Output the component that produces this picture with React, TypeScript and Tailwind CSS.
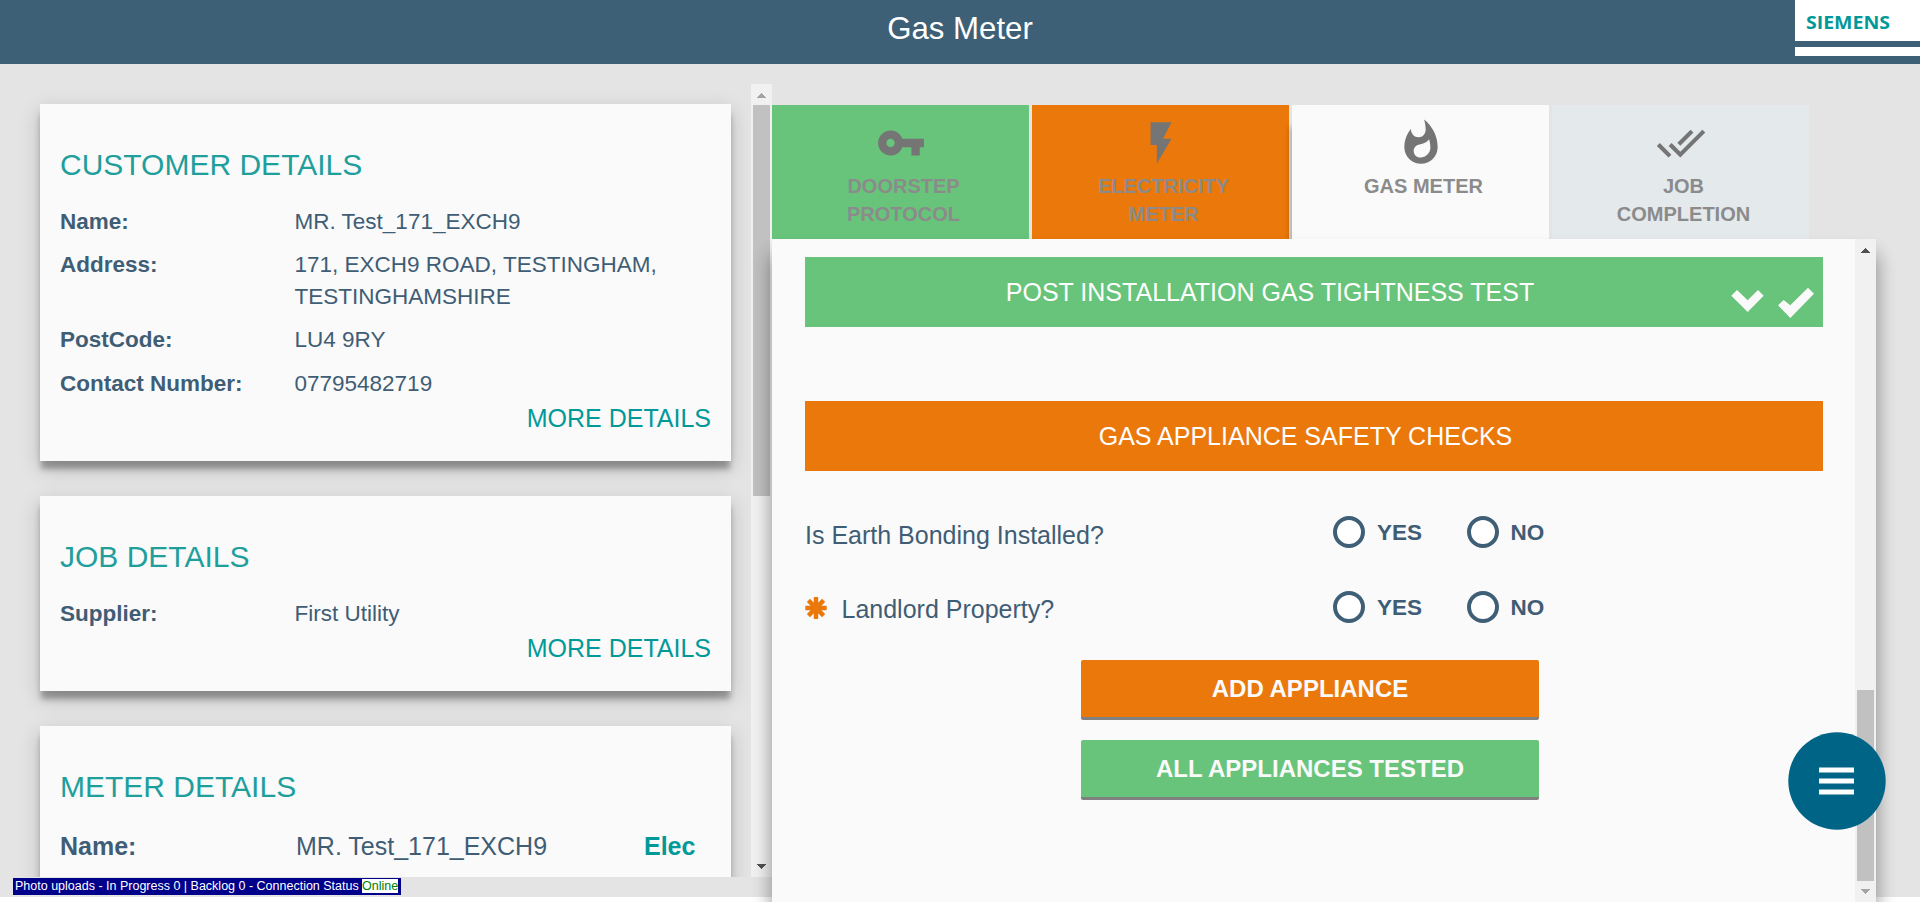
import type { ReactNode } from "react";

const cardShadow =
  "shadow-[0_9px_6px_-1px_rgba(0,0,0,0.3),0_7px_20px_0_rgba(0,0,0,0.19)]";

function Card({ title, className, children }: { title: string; className: string; children: ReactNode }) {
  return (
    <section className={`w-[691px] shrink-0 bg-[#fafafa] px-5 pt-[41px] ${cardShadow} ${className}`}>
      <h2 className="mb-[21px] text-[30px] leading-10 text-[#1f9f9c]">{title}</h2>
      {children}
    </section>
  );
}

function Row({ label, children, className = "" }: { label: string; children: ReactNode; className?: string }) {
  return (
    <div className={`flex text-[22.5px] leading-8 ${className}`}>
      <div className="w-[234.5px] shrink-0 font-bold">{label}</div>
      <div>{children}</div>
    </div>
  );
}

function MoreDetails() {
  return <a className="mt-0.5 block text-right text-[25px] leading-8 text-[#009999]">MORE DETAILS</a>;
}

function Arrow({ up = false, color }: { up?: boolean; color: string }) {
  return (
    <svg className="h-[21px] w-full shrink-0" viewBox="0 0 21 21" shapeRendering="crispEdges">
      <path d={up ? "M6 14h9l-4.5-5z" : "M6 8h9l-4.5 5z"} fill={color} />
    </svg>
  );
}

function Tab({ className, icon, lines }: { className: string; icon: string; lines: string[] }) {
  return (
    <div className={`flex h-[134px] w-[257px] flex-col items-center pt-[13px] ${className}`}>
      <svg className="size-[50px]" viewBox="0 0 24 24" fill="#757575">
        <path d={icon} />
      </svg>
      <div className="mt-1 pl-[6px] text-center text-[20px] leading-7 font-bold text-[#8b8b8b]">
        {lines.map((l) => (
          <div key={l}>{l}</div>
        ))}
      </div>
    </div>
  );
}

function Radio({ label, className }: { label: string; className: string }) {
  return (
    <label className={`flex items-center gap-3 ${className}`}>
      <span className="size-8 rounded-full border-4 border-[#3f5f77] bg-white" />
      <span className="pt-0.5 text-[22.5px] leading-7 font-bold">{label}</span>
    </label>
  );
}

function Question({ label, required = false, className }: { label: string; required?: boolean; className: string }) {
  return (
    <div className={`flex items-center ${className}`}>
      <div className={`flex w-[528px] items-center text-[25px] leading-7 ${required ? "pt-[3px]" : "pt-[5px]"}`}>
        {required && (
          <svg className="-mt-[1px] mr-[14.5px] size-[22px]" viewBox="-11 -11 22 22" stroke="#eb780b" strokeWidth="4.4">
            <path d="M0-11V11M-10.7 0H10.7M-7.6-7.6L7.6 7.6M-7.6 7.6L7.6-7.6" />
          </svg>
        )}
        {label}
      </div>
      <Radio label="YES" className="w-[133.5px]" />
      <Radio label="NO" className="" />
    </div>
  );
}

export default function App() {
  return (
    <div className="relative h-[902px] w-[1920px] overflow-hidden bg-white font-['Liberation_Sans',Arial,sans-serif] text-[#3f5d75]">
      <header className="flex h-16 items-start bg-[#3d6076]">
        <div className="w-[125px]" />
        <h1 className="flex-1 text-center text-[31.2px] leading-[58px] text-white">Gas Meter</h1>
        <div className="h-14 w-[125px] bg-white">
          <svg className="h-[41px] w-full" viewBox="0 0 125 41">
            <text
              x="11"
              y="28.5"
              textLength="84"
              lengthAdjust="spacingAndGlyphs"
              fontFamily="'Open Sans','Noto Sans',sans-serif"
              fontWeight="700"
              fontSize="18"
              fill="#009999"
            >
              SIEMENS
            </text>
          </svg>
          <div className="h-[5.5px] bg-[#3d6076]" />
        </div>
      </header>

      <main className="flex h-[833px] bg-[#e4e4e4]">
        <div className="flex h-[833px] w-[772px] shrink-0 flex-col pt-5">
          <div className="flex h-[793px] overflow-hidden">
            <div className="flex w-[751px] flex-col gap-[35px] pt-5 pl-10">
              <Card title="CUSTOMER DETAILS" className="h-[357px]">
                <Row label="Name:">MR. Test_171_EXCH9</Row>
                <Row label="Address:" className="mt-[11px]">
                  171, EXCH9 ROAD, TESTINGHAM,
                  <br />
                  TESTINGHAMSHIRE
                </Row>
                <Row label="PostCode:" className="mt-[11px]">LU4 9RY</Row>
                <Row label="Contact Number:" className="mt-3">07795482719</Row>
                <MoreDetails />
              </Card>
              <Card title="JOB DETAILS" className="h-[195px]">
                <Row label="Supplier:">First Utility</Row>
                <MoreDetails />
              </Card>
              <Card title="METER DETAILS" className="h-[195px]">
                <div className="flex pt-0.5 text-[25px] leading-8">
                  <div className="w-[236px] font-bold">Name:</div>
                  <div className="w-[348px]">MR. Test_171_EXCH9</div>
                  <div className="font-bold text-[#009999]">Elec</div>
                </div>
              </Card>
            </div>
            <div className="flex w-[21px] flex-col bg-[#f1f1f1]">
              <Arrow up color="#a3a3a3" />
              <div className="mx-0.5 h-[391px] bg-[#c1c1c1]" />
              <div className="flex-1" />
              <Arrow color="#505050" />
            </div>
          </div>
          <div className="mt-px ml-[13px] flex h-[17px] w-[388px] items-start bg-[#00008b] pt-px pl-0.5 text-[12.5px] leading-[14px] whitespace-nowrap text-white">
            <span className="w-[347px]">Photo uploads - In Progress 0 | Backlog 0 - Connection Status</span>
            <span className="w-9 bg-white text-[#008000]">Online</span>
          </div>
        </div>

        <div className="w-[1104px] shrink-0 pt-[41px]">
          <div className="flex gap-[3px]">
            <Tab
              className="bg-[#68c47a]"
              lines={["DOORSTEP", "PROTOCOL"]}
              icon="M12.65 10C11.83 7.67 9.61 6 7 6c-3.31 0-6 2.69-6 6s2.69 6 6 6c2.61 0 4.83-1.67 5.65-4H17v4h4v-4h2v-4H12.65zM7 14c-1.1 0-2-.9-2-2s.9-2 2-2 2 .9 2 2-.9 2-2 2z"
            />
            <Tab className="bg-[#eb780b]" lines={["ELECTRICITY", "METER"]} icon="M7 2v11h3v9l7-12h-4l4-8z" />
            <Tab
              className="bg-[#fafafa] shadow-[-2px_22px_6px_0_rgba(0,0,0,0.26)]"
              lines={["GAS METER"]}
              icon="M13.5.67s.74 2.65.74 4.8c0 2.06-1.35 3.73-3.41 3.73-2.07 0-3.63-1.67-3.63-3.73l.03-.36C5.21 7.51 4 10.62 4 14c0 4.42 3.58 8 8 8s8-3.58 8-8C20 8.61 17.41 3.8 13.5.67zM11.71 19c-1.78 0-3.22-1.4-3.22-3.14 0-1.62 1.05-2.76 2.81-3.12 1.77-.36 3.6-1.21 4.62-2.58.39 1.29.59 2.65.59 4.04 0 2.65-2.15 4.8-4.8 4.8z"
            />
            <Tab
              className="bg-[#e4e9eb] shadow-[-3px_0_0_0_#e4e4e4]"
              lines={["JOB", "COMPLETION"]}
              icon="M18 7l-1.41-1.41-6.34 6.34 1.41 1.41L18 7zm4.24-1.41L11.66 16.17 7.48 12l-1.41 1.41L11.66 19l12-12-1.42-1.41zM.41 13.41L6 19l1.41-1.41L1.83 12 .41 13.41z"
            />
          </div>

          <div className="relative flex h-[663px] bg-[#fafafa] shadow-[0_16px_17px_0_rgba(0,0,0,0.25),0_16px_20px_0_rgba(0,0,0,0.19)]">
            <div className="w-[1083px] pt-[18px] pl-[33px]">
              <div className="flex h-[70px] w-[1018px] bg-[#68c47a] text-white">
                <div className="w-[924px] pl-[6px] text-center text-[25px] leading-[70px]">
                  POST INSTALLATION GAS TIGHTNESS TEST
                </div>
                <svg className="h-[70px] w-[94px]" viewBox="0 0 94 70" fill="#fafafa">
                  <path d="M2.3 38.7L8 33l10.7 10.3L29 33l5.7 5.7L18.7 55z" />
                  <path d="M49 48.3l5.7-5.3 6.6 5.3L79 30.7l6 6L61.3 61z" />
                </svg>
              </div>
              <div className="mt-[74px] h-[70px] w-[1018px] bg-[#eb780b] pr-[17px] text-center text-[25px] leading-[70px] text-white">
                GAS APPLIANCE SAFETY CHECKS
              </div>
              <Question label="Is Earth Bonding Installed?" className="mt-[45px] h-8" />
              <Question label="Landlord Property?" required className="mt-[43px] h-8" />
              <div className="mt-[37px] ml-[276px] flex w-[458px] flex-col gap-5 text-center text-[24px] leading-[57px] font-bold text-[#fafafa]">
                <button className="h-[60px] rounded-[2px] border-b-3 border-[#808080] bg-[#eb780b]">ADD APPLIANCE</button>
                <button className="h-[60px] rounded-[2px] border-b-3 border-[#808080] bg-[#68c47a]">
                  ALL APPLIANCES TESTED
                </button>
              </div>
            </div>
            <div className="flex w-[21px] flex-col bg-[#f1f1f1]">
              <Arrow up color="#505050" />
              <div className="flex-1" />
              <div className="mx-0.5 h-[191px] bg-[#c1c1c1]" />
              <Arrow color="#a3a3a3" />
            </div>
          </div>
        </div>
      </main>

      <button className="absolute top-[732px] left-[1788px] size-[98px]">
        <svg className="size-full" viewBox="0 0 98 98">
          <circle cx="49" cy="49" r="48.7" fill="#006487" />
          <path d="M31 35.6h35v4.8H31zM31 46.6h35v4.8H31zM31 57.6h35v4.8H31z" fill="#fff" />
        </svg>
      </button>
    </div>
  );
}
